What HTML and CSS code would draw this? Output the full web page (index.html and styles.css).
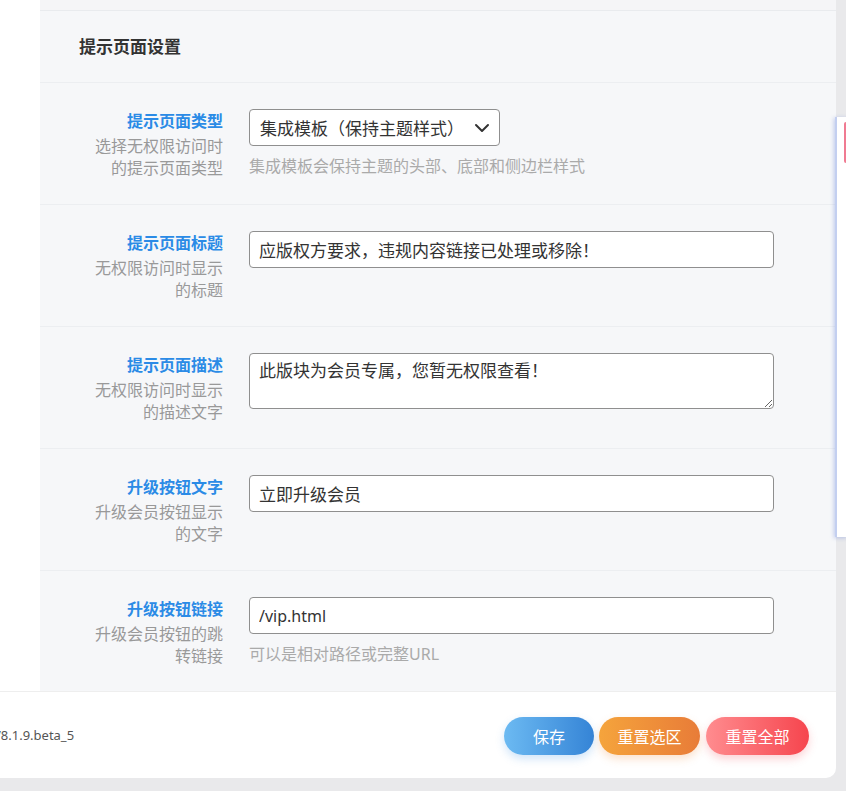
FILE: index.html
```html
<!DOCTYPE html>
<html lang="zh-CN">
<head>
  <meta charset="UTF-8" />
  <meta name="viewport" content="width=device-width, initial-scale=1.0"/>
  <title>提示页面设置</title>
  <link rel="stylesheet" href="styles.css">
</head>
<body>

  <div class="panel">
    <div class="panel-main">
      <div class="sidebar"></div>

      <div class="content">
        <div class="prev-section"></div>

        <div class="section-title">提示页面设置</div>

        <div class="field-row">
          <div class="field-label">
            <div class="label-title">提示页面类型</div>
            <div class="label-desc">选择无权限访问时的提示页面类型</div>
          </div>
          <div class="field-body">
            <div class="select-box">
              <span>集成模板（保持主题样式）</span>
              <svg width="16" height="10" viewBox="0 0 16 10"><path d="M2 2 L8 8 L14 2" fill="none" stroke="#333" stroke-width="2" stroke-linecap="round" stroke-linejoin="round"/></svg>
            </div>
            <div class="field-hint">集成模板会保持主题的头部、底部和侧边栏样式</div>
          </div>
        </div>

        <div class="field-row">
          <div class="field-label">
            <div class="label-title">提示页面标题</div>
            <div class="label-desc">无权限访问时显示的标题</div>
          </div>
          <div class="field-body">
            <input type="text" class="text-input" value="应版权方要求，违规内容链接已处理或移除！" />
          </div>
        </div>

        <div class="field-row">
          <div class="field-label">
            <div class="label-title">提示页面描述</div>
            <div class="label-desc">无权限访问时显示的描述文字</div>
          </div>
          <div class="field-body">
            <textarea class="text-area">此版块为会员专属，您暂无权限查看！</textarea>
          </div>
        </div>

        <div class="field-row">
          <div class="field-label">
            <div class="label-title">升级按钮文字</div>
            <div class="label-desc">升级会员按钮显示的文字</div>
          </div>
          <div class="field-body">
            <input type="text" class="text-input" value="立即升级会员" />
          </div>
        </div>

        <div class="field-row">
          <div class="field-label">
            <div class="label-title">升级按钮链接</div>
            <div class="label-desc">升级会员按钮的跳转链接</div>
          </div>
          <div class="field-body">
            <input type="text" class="text-input latin" value="/vip.html" />
            <div class="field-hint">可以是相对路径或完整URL</div>
          </div>
        </div>
      </div>
    </div>

    <div class="panel-footer">
      <div class="version">V8.1.9.beta_5</div>
      <div class="actions">
        <button class="btn btn-save">保存</button>
        <button class="btn btn-reset">重置选区</button>
        <button class="btn btn-reset-all">重置全部</button>
      </div>
    </div>
  </div>

  <div class="side-tab"><span class="side-tab-mark"></span></div>

</body>
</html>
```

FILE: styles.css
```css
body {
  margin: 0;
  background: #e9e9eb;
  font-family: "Noto Sans", "Noto Sans CJK SC", sans-serif;
  color: #333;
  width: 846px;
  height: 791px;
  overflow: hidden;
}

.panel {
  width: 836px;
  height: 778px;
  background: #fff;
  border-radius: 0 0 10px 0;
  overflow: hidden;
  display: flex;
  flex-direction: column;
}

.panel-main {
  display: flex;
  height: 691px;
}

.sidebar {
  width: 40px;
  background: #fff;
}

.content {
  flex: 1;
  background: #f6f7f9;
}

.prev-section {
  height: 10px;
  background: #f5f5f7;
  border-bottom: 1px solid #e9ebee;
}

.section-title {
  height: 71px;
  line-height: 71px;
  padding-left: 39px;
  font-size: 17px;
  font-weight: 700;
  color: #333;
  border-bottom: 1px solid #eceef1;
}

.field-row {
  display: flex;
  gap: 26px;
  padding: 26px 0 25px 43px;
  border-bottom: 1px solid #eceef1;
}

.field-row:last-child {
  border-bottom: none;
}

.field-label {
  width: 140px;
  text-align: right;
  font-size: 16px;
  line-height: 22px;
  padding-top: 1px;
}

.label-title {
  color: #2b8be6;
  font-weight: 700;
  margin-bottom: 3px;
}

.label-desc {
  color: #999;
}

.field-body {
  width: 525px;
}

.select-box {
  display: flex;
  align-items: center;
  justify-content: space-between;
  box-sizing: border-box;
  width: 251px;
  height: 37px;
  padding: 0 9px 0 10px;
  background: #fff;
  border: 1px solid #8f8f8f;
  border-radius: 4px;
  font-size: 17px;
  color: #333;
}

.text-input, .text-area {
  display: block;
  box-sizing: border-box;
  width: 525px;
  border: 1px solid #8f8f8f;
  border-radius: 4px;
  background: #fff;
  font-family: "Noto Sans", "Noto Sans CJK SC", sans-serif;
  font-size: 17px;
  color: #333;
  margin: 0;
}

.text-input {
  height: 37px;
  padding: 0 9px;
}

.text-input.latin {
  font-size: 16px;
}

.text-area {
  height: 56px;
  padding: 6px 9px;
  line-height: 22px;
  resize: vertical;
}

.field-hint {
  margin-top: 9px;
  font-size: 16px;
  line-height: 22px;
  color: #aaa;
}

.panel-footer {
  flex: 1;
  display: flex;
  align-items: center;
  justify-content: space-between;
  border-top: 1px solid #eeeeee;
  padding-right: 27px;
}

.version {
  margin-left: -7px;
  font-size: 13px;
  color: #555;
}

.actions {
  display: flex;
  gap: 5px;
  padding-top: 2px;
}

.btn {
  height: 38px;
  border: none;
  border-radius: 19px;
  color: #fff;
  font-family: "Noto Sans CJK SC", sans-serif;
  font-size: 16px;
  padding: 0;
  cursor: pointer;
}

.btn-save {
  width: 90px;
  background: linear-gradient(90deg, #6cbaf2, #3584d6);
  box-shadow: 0 4px 8px rgba(70, 150, 230, 0.25);
}

.btn-reset {
  width: 101px;
  background: linear-gradient(90deg, #f5a43c, #e87c38);
  box-shadow: 0 4px 8px rgba(240, 140, 60, 0.25);
}

.btn-reset-all {
  width: 103px;
  margin-left: 1px;
  background: linear-gradient(90deg, #ff8c8f, #f6454e);
  box-shadow: 0 4px 8px rgba(245, 80, 90, 0.25);
}

.side-tab {
  position: absolute;
  top: 117px;
  left: 835px;
  width: 11px;
  height: 420px;
  background: #fff;
  border-left: 2px solid #c3cff0;
  box-shadow: -1px 1px 4px rgba(120, 145, 220, 0.45);
}

.side-tab-mark {
  position: absolute;
  top: 5px;
  right: 0;
  width: 4px;
  height: 41px;
  background: #f07b92;
  border-radius: 2px 0 0 2px;
}
```
